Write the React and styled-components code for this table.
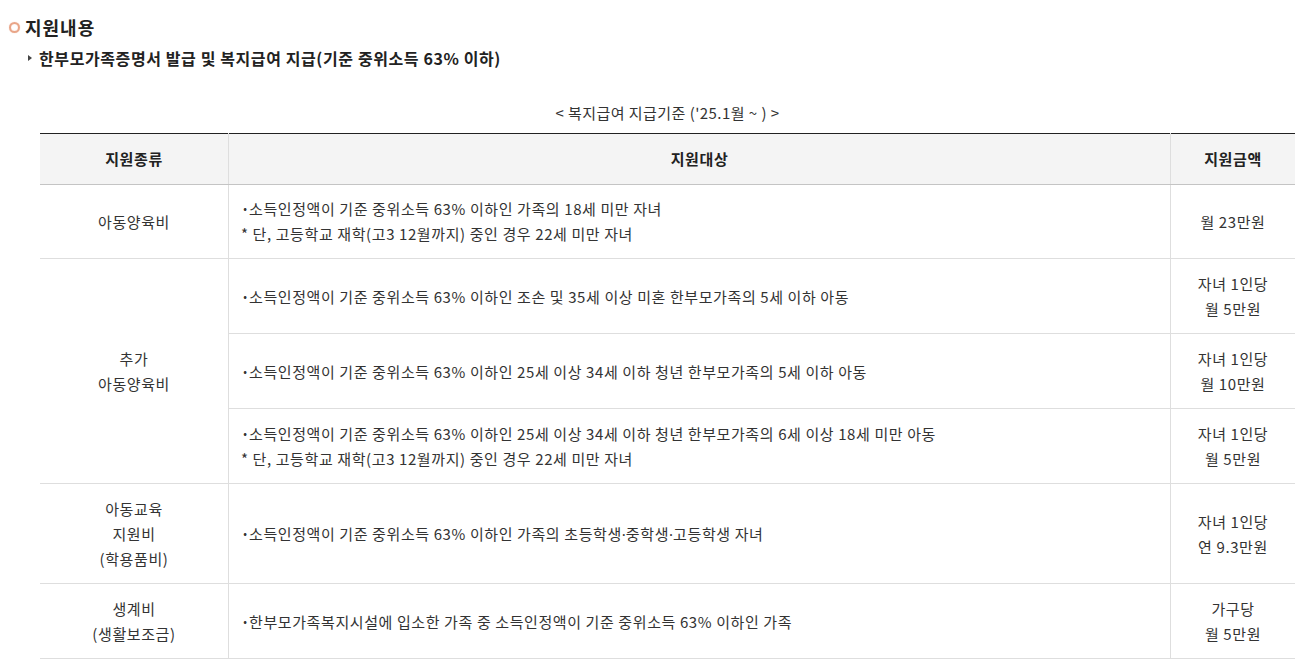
import React from "react";
import styled, { createGlobalStyle } from "styled-components";

const Global = createGlobalStyle`
  html, body { margin: 0; padding: 0; background: #fff; }
  body { font-family: "Noto Sans CJK KR", "Noto Sans", sans-serif; color: #333; }
`;

const Page = styled.div`
  padding: 15px 9px 0 9px;
  width: 1304px;
  box-sizing: border-box;
`;

const Title = styled.h2`
  display: flex;
  align-items: center;
  gap: 5px;
  margin: 0;
  font-size: 18px;
  letter-spacing: 1px;
  line-height: 24px;
  font-weight: 700;
  color: #222;
`;

const Ring = styled.span`
  width: 7px;
  height: 7px;
  border-radius: 50%;
  border: 2.5px solid #e9a588;
  box-shadow: 0 0 1px #f0c0a8, inset 0 0 1px #f0c0a8;
  flex: none;
`;

const Sub = styled.h3`
  display: flex;
  align-items: center;
  gap: 7px;
  margin: 8px 0 0 19px;
  font-size: 16px;
  letter-spacing: 0.6px;
  line-height: 22px;
  font-weight: 700;
  color: #222;
`;

const Tri = styled.span`
  width: 0;
  height: 0;
  border-left: 4px solid #444;
  border-top: 3px solid transparent;
  border-bottom: 3px solid transparent;
  flex: none;
`;

const Wrap = styled.div`
  margin: 34px 0 0 31px;
  width: 1255px;
`;

const Caption = styled.div`
  text-align: center;
  font-size: 15px;
  letter-spacing: 0.45px;
  line-height: 20px;
  color: #333;
  margin-bottom: 10px;
`;

const Table = styled.table`
  width: 100%;
  border-collapse: collapse;
  border-top: 1px solid #222;
  font-size: 15px;
  letter-spacing: 0.6px;
  line-height: 25px;
  color: #333;
`;

const Th = styled.th`
  background: #f4f4f4;
  font-weight: 700;
  color: #222;
  padding: 12px 0 13px;
  border-bottom: 1px solid #c4c4c4;
  border-left: ${(p) => (p.$first ? "none" : "1px solid #dedede")};
  width: ${(p) => p.$w || "auto"};
`;

const Td = styled.td`
  text-align: ${(p) => (p.$left ? "left" : "center")};
  padding: 12px ${(p) => (p.$left ? "12px" : "0")};
  padding-top: ${(p) => (p.$tight ? "11px" : "12px")};
  border-bottom: 1px solid #dedede;
  border-left: ${(p) => (p.$first ? "none" : "1px solid #dedede")};
  vertical-align: middle;
  white-space: nowrap;
`;

const Bullet = styled.span`
  display: inline-block;
  width: 8px;
  text-align: center;
  font-size: 11px;
  letter-spacing: 0;
  vertical-align: top;
`;

const Dot = styled.span`
  font-family: "Noto Sans", sans-serif;
  letter-spacing: 0;
`;

function renderDots(s) {
  const parts = s.split("·");
  return parts.map((p, i) => (
    <React.Fragment key={i}>
      {p}
      {i < parts.length - 1 && <Dot>·</Dot>}
    </React.Fragment>
  ));
}

const Lines = ({ items }) =>
  items.map((t, i) => {
    if (t.startsWith("•")) {
      return (
        <div key={i}>
          <Bullet>•</Bullet>
          {renderDots(t.slice(1))}
        </div>
      );
    }
    return <div key={i}>{t}</div>;
  });

const rows = [
  { a: ["아동양육비"], b: ["•소득인정액이 기준 중위소득 63% 이하인 가족의 18세 미만 자녀", "* 단, 고등학교 재학(고3 12월까지) 중인 경우 22세 미만 자녀"], c: ["월 23만원"] },
  { a: ["추가", "아동양육비"], span: 3, b: ["•소득인정액이 기준 중위소득 63% 이하인 조손 및 35세 이상 미혼 한부모가족의 5세 이하 아동"], c: ["자녀 1인당", "월 5만원"] },
  { b: ["•소득인정액이 기준 중위소득 63% 이하인 25세 이상 34세 이하 청년 한부모가족의 5세 이하 아동"], c: ["자녀 1인당", "월 10만원"] },
  { b: ["•소득인정액이 기준 중위소득 63% 이하인 25세 이상 34세 이하 청년 한부모가족의 6세 이상 18세 미만 아동", "* 단, 고등학교 재학(고3 12월까지) 중인 경우 22세 미만 자녀"], c: ["자녀 1인당", "월 5만원"] },
  { a: ["아동교육", "지원비", "(학용품비)"], b: ["•소득인정액이 기준 중위소득 63% 이하인 가족의 초등학생·중학생·고등학생 자녀"], c: ["자녀 1인당", "연 9.3만원"] },
  { a: ["생계비", "(생활보조금)"], b: ["•한부모가족복지시설에 입소한 가족 중 소득인정액이 기준 중위소득 63% 이하인 가족"], c: ["가구당", "월 5만원"] },
];

export default function App() {
  return (
    <Page>
      <Global />
      <Title>
        <Ring />
        지원내용
      </Title>
      <Sub>
        <Tri />
        한부모가족증명서 발급 및 복지급여 지급(기준 중위소득 63% 이하)
      </Sub>
      <Wrap>
        <Caption>&lt; 복지급여 지급기준 ('25.1월 ~ ) &gt;</Caption>
        <Table>
          <thead>
            <tr>
              <Th $first $w="188px">지원종류</Th>
              <Th>지원대상</Th>
              <Th $w="124px">지원금액</Th>
            </tr>
          </thead>
          <tbody>
            {rows.map((r, i) => (
              <tr key={i}>
                {r.a && (
                  <Td $first $tight={i === 0} rowSpan={r.span || 1}>
                    <Lines items={r.a} />
                  </Td>
                )}
                <Td $left $tight={i === 0}>
                  <Lines items={r.b} />
                </Td>
                <Td $tight={i === 0}>
                  <Lines items={r.c} />
                </Td>
              </tr>
            ))}
          </tbody>
        </Table>
      </Wrap>
    </Page>
  );
}
